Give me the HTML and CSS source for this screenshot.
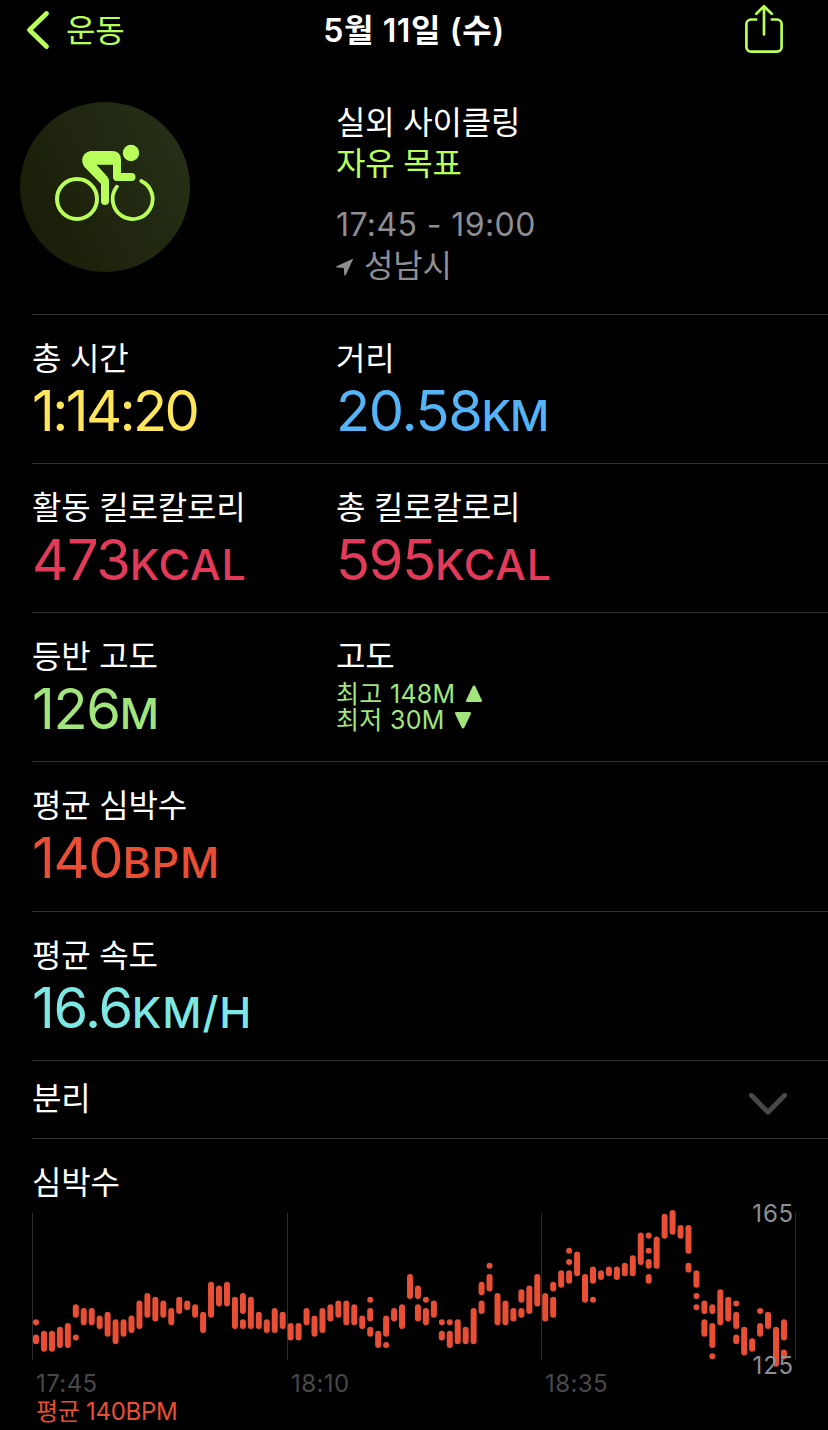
FILE: index.html
```html
<!DOCTYPE html>
<html lang="ko">
<head>
  <meta charset="UTF-8">
  <meta name="viewport" content="width=device-width, initial-scale=1.0">
  <meta name="theme-color" content="#000000">
  <title>5월 11일 (수) - 운동</title>
  <link rel="stylesheet" href="styles.css">
</head>
<body>
  <header class="nav">
    <a href="#" class="nav-back">
      <svg class="nav-chevron" viewBox="0 0 24 40" fill="none" stroke="currentColor" stroke-width="4.8" stroke-linecap="round" stroke-linejoin="round">
        <path d="M20.5 3.5L3.5 20l17 16.5"></path>
      </svg>
      <span>운동</span>
    </a>
    <h1>5월 11일 (수)</h1>
    <a href="#" class="nav-share" aria-label="공유">
      <svg viewBox="0 0 40 50" fill="none" stroke="currentColor" stroke-width="2.7" stroke-linecap="round" stroke-linejoin="round">
        <path d="M13.2 15.5H7a4.6 4.6 0 0 0-4.6 4.6v23A4.6 4.6 0 0 0 7 47.7h26a4.6 4.6 0 0 0 4.6-4.6v-23a4.6 4.6 0 0 0-4.6-4.6h-6.2" stroke-linecap="butt"></path>
        <path d="M20 30.5V2.4M12.3 9.8L20 2.2l7.7 7.6"></path>
      </svg>
    </a>
  </header>

  <main>
    <section class="summary">
      <div class="badge">
        <!-- Cyclist -->
        <svg class="badge-icon" viewBox="0 0 102 78" fill="none" stroke="currentColor" stroke-linecap="round" stroke-linejoin="round">
          <circle cx="23" cy="55" r="20" stroke-width="4"></circle>
          <path d="M62.9 42.7A20 20 0 1 0 87.3 37" stroke-width="3.8"></path>
          <path d="M38 7h20q9 0 9 9v13h10.500a4 4 0 0 1 0 8h-14.500a4 4 0 0 1-4-4V20.800H42.500L53 32.200q2 2.200 2 5.200V57a4 4 0 0 1-8 0V40L31.500 24C25 17 29 7 38 7z" fill="currentColor" stroke="none"></path>
          <circle cx="77" cy="9" r="8.200" fill="currentColor" stroke="none"></circle>
        </svg>
      </div>
      <div class="summary-info">
        <p>실외 사이클링</p>
        <p class="goal">자유 목표</p>
        <p class="time">17:45 - 19:00</p>
        <p class="place">
          <svg class="place-icon" viewBox="0 0 18 18" fill="currentColor"><path d="M17.400.600L.6 8.300q-.8.800.2 1.200l7 .500.500 7q.500 1.200 1.400.200z"></path></svg>
          성남시
        </p>
      </div>
    </section>

    <section class="stats">
      <div class="row">
        <div class="stat">
          <h2>총 시간</h2>
          <p class="value yellow duration">1:14:20</p>
        </div>
        <div class="stat">
          <h2>거리</h2>
          <p class="value blue">20.58<span class="unit unit-km">KM</span></p>
        </div>
      </div>
      <div class="row">
        <div class="stat">
          <h2>활동 킬로칼로리</h2>
          <p class="value pink">473<span class="unit">KCAL</span></p>
        </div>
        <div class="stat">
          <h2>총 킬로칼로리</h2>
          <p class="value pink">595<span class="unit">KCAL</span></p>
        </div>
      </div>
      <div class="row">
        <div class="stat">
          <h2>등반 고도</h2>
          <p class="value green">126<span class="unit">M</span></p>
        </div>
        <div class="stat">
          <h2>고도</h2>
          <ul class="elevation">
            <li>최고 148M <svg viewBox="0 0 18 18" fill="currentColor"><path d="M7.600 1.400q1.400-2 2.800 0l6.400 13.600q.800 2-1.200 2H2.400q-2 0-1.200-2z"></path></svg></li>
            <li>최저 30M <svg viewBox="0 0 18 18" fill="currentColor"><path d="M7.600 16.600q1.400 2 2.800 0L16.800 3q.800-2-1.200-2H2.400q-2 0-1.200 2z"></path></svg></li>
          </ul>
        </div>
      </div>
      <div class="row row-heart">
        <div class="stat">
          <h2>평균 심박수</h2>
          <p class="value red">140<span class="unit">BPM</span></p>
        </div>
      </div>
      <div class="row">
        <div class="stat">
          <h2>평균 속도</h2>
          <p class="value cyan">16.6<span class="unit">KM/H</span></p>
        </div>
      </div>
      <div class="row row-splits">
        <h2>분리</h2>
        <svg class="splits-chevron" viewBox="0 0 40 24" fill="none" stroke="currentColor" stroke-width="4.8" stroke-linecap="round" stroke-linejoin="round">
          <path d="M3.300 3.200L20 20.300 36.700 3.200"></path>
        </svg>
      </div>
    </section>

    <section class="heart">
      <h2>심박수</h2>
      <div class="chart">
        <svg id="heart-chart" viewBox="0 0 796 170">
          <path class="grid-line" d="M32.500 13v147M287.500 13v147M541.500 13v147M795.500 13v147"></path>
          <g id="heart-bars" class="bars"></g>
        </svg>
        <span class="chart-max">165</span>
        <span class="chart-min">125</span>
      </div>
      <div class="chart-times">
        <span>17:45</span>
        <span>18:10</span>
        <span>18:35</span>
      </div>
      <p class="chart-average">평균 140BPM</p>
    </section>
  </main>

  <script src="chart.js"></script>
</body>
</html>
```
FILE: styles.css
```css
*, *::before, *::after {
  margin: 0;
  padding: 0;
  box-sizing: border-box;
}

body {
  font-family: Inter, 'Noto Sans CJK KR', sans-serif;
  background-color: #000;
  color: #fff;
  font-size: 32px;
  line-height: 41px;
  letter-spacing: -0.2px;
  height: 1430px;
  overflow: hidden;
}

a {
  color: inherit;
  text-decoration: none;
}

h2 {
  font-size: 32px;
  font-weight: 400;
  line-height: 41px;
}

svg {
  display: block;
}

/* Navigation bar */
.nav {
  display: grid;
  grid-template-columns: 1fr auto 1fr;
  align-items: center;
  height: 60px;
  padding: 0 44px 0 26px;
}

.nav-back,
.nav-share {
  color: #b9ff59;
}

.nav-back {
  display: flex;
  align-items: center;
  gap: 16px;
}

.nav-chevron {
  width: 24px;
  height: 40px;
}

.nav h1 {
  font-size: 32px;
  font-weight: 600;
  line-height: 41px;
  letter-spacing: 0.6px;
  padding-left: 18px;
}

.nav-share {
  justify-self: end;
}

.nav-share svg {
  width: 40px;
  height: 50px;
  margin-bottom: 2px;
}

/* Workout summary */
.summary {
  display: flex;
  height: 254px;
  padding: 42px 0 0 20px;
}

.badge {
  display: flex;
  align-items: center;
  justify-content: center;
  width: 170px;
  height: 170px;
  margin-right: 146px;
  border-radius: 50%;
  background: linear-gradient(65deg, #191b05, #20260f 50%, #273118);
  color: #b9ff59;
}

.badge-icon {
  width: 102px;
  height: 78px;
  margin-bottom: 8px;
}

.goal {
  color: #b9ff59;
}

.time,
.place {
  color: #8e8e93;
}

.time {
  margin-top: 20px;
  letter-spacing: 0.4px;
}

.place {
  display: flex;
  align-items: center;
  gap: 10px;
}

.place-icon {
  width: 18px;
  height: 18px;
  margin-top: 2px;
}

/* Stats */
.stats {
  padding-left: 32px;
}

.row {
  display: grid;
  grid-template-columns: 304px 1fr;
  height: 149px;
  padding-top: 23px;
  border-top: 1px solid #333335;
}

.row-heart {
  height: 150px;
}

.value {
  font-size: 56px;
  line-height: 64px;
  letter-spacing: -1.3px;
  white-space: nowrap;
}

.duration {
  letter-spacing: -2.6px;
}

.unit {
  font-size: 43px;
  font-weight: 500;
  letter-spacing: 0.9px;
}

.unit-km {
  letter-spacing: -1.2px;
}

.yellow { color: #ffe55c; }
.blue { color: #55b4f6; }
.pink { color: #e43a59; }
.green { color: #a3e57d; }
.red { color: #e94f35; }
.cyan { color: #7de7e3; }

.elevation {
  list-style: none;
  color: #a3e57d;
  font-size: 25px;
  line-height: 26px;
  letter-spacing: 0.3px;
  padding-top: 4px;
}

.elevation li {
  display: flex;
  align-items: center;
  gap: 9px;
}

.elevation svg {
  width: 18px;
  height: 18px;
}

.row-splits {
  display: flex;
  justify-content: space-between;
  height: 79px;
  padding: 17px 40px 0 0;
  border-bottom: 1px solid #333335;
}

.splits-chevron {
  width: 40px;
  height: 24px;
  margin-top: 14px;
  color: #48484a;
}

/* Heart rate chart */
.heart h2 {
  height: 61px;
  padding: 23px 0 0 32px;
}

.chart {
  position: relative;
  height: 170px;
}

.chart svg {
  width: 796px;
  height: 170px;
}

.grid-line {
  stroke: #2c2c2e;
  stroke-width: 1;
}

.bars {
  stroke: #e94f35;
  stroke-width: 6;
  stroke-linecap: round;
}

/* Range labels sit over the bars */
.chart-max,
.chart-min {
  position: absolute;
  right: 34px;
  color: #8e8e93;
  font-size: 24px;
  line-height: 28px;
  letter-spacing: 0.8px;
}

.chart-max {
  top: 0;
}

.chart-min {
  top: 152px;
}

.chart-times {
  display: grid;
  grid-template-columns: 255px 254px 1fr;
  padding-left: 36px;
  color: #48484a;
  font-size: 24px;
  line-height: 28px;
  letter-spacing: 0.4px;
}

.chart-average {
  padding-left: 36px;
  color: #e94f35;
  font-size: 24px;
  line-height: 27px;
  letter-spacing: -0.3px;
}
```
FILE: chart.js
```js
// Heart rate ranges in BPM, one column per sample: [high, low] pairs
const samples = [
  [[136, 136], [132, 131]], [[133, 129]], [[133, 129]], [[134, 130]], [[135, 130]],
  [[140, 138], [132, 132]], [[139, 136]], [[139, 136]], [[137, 135]], [[138, 133]],
  [[136, 131]], [[136, 133]], [[137, 134]], [[141, 135]], [[143, 138]],
  [[142, 137]], [[141, 138]], [[139, 136]], [[142, 139]], [[141, 140]],
  [[140, 138]], [[138, 134]], [[146, 138]], [[145, 141]], [[146, 141]],
  [[142, 135]], [[143, 139], [136, 135]], [[142, 135]], [[138, 135]], [[136, 134]],
  [[139, 134]], [[138, 135]], [[135, 132]], [[135, 132]], [[139, 136]],
  [[137, 133]], [[139, 134]], [[140, 137]], [[141, 138]], [[141, 136]],
  [[140, 136]], [[137, 135]], [[142, 142], [139, 137], [134, 133]], [[133, 130]], [[137, 133], [130, 130]],
  [[139, 137]], [[140, 135]], [[148, 143]], [[145, 143], [140, 137]], [[142, 142], [139, 136]],
  [[141, 138]], [[136, 136], [133, 132]], [[136, 136], [133, 130]], [[136, 131]], [[134, 131]],
  [[139, 131]], [[146, 144], [141, 139]], [[151, 151], [148, 145]], [[143, 136]], [[141, 136]],
  [[139, 137]], [[144, 142], [139, 138]], [[145, 139]], [[148, 141]], [[143, 137]],
  [[146, 145], [142, 138]], [[149, 146]], [[155, 155], [152, 152], [149, 147]], [[154, 149]], [[148, 142]],
  [[150, 147], [142, 142]], [[149, 148]], [[150, 149]], [[150, 148]], [[151, 149]],
  [[153, 149]], [[159, 152]], [[159, 159], [155, 155], [152, 151], [148, 147]], [[158, 151]], [[164, 159]],
  [[165, 160]], [[161, 159]], [[161, 155], [151, 150]], [[149, 146], [143, 143], [140, 140]], [[141, 139], [136, 133]],
  [[140, 139], [135, 130], [127, 127]], [[144, 136]], [[142, 137]], [[141, 141], [138, 135], [132, 131]], [[134, 128]],
  [[131, 129]], [[139, 139], [135, 133]], [[138, 135]], [[134, 125]], [[136, 132], [128, 127]]
];

const x = i => 36 + i * 7.957;
const y = bpm => 13 + (165 - bpm) * 3.77;

const path = document.createElementNS('http://www.w3.org/2000/svg', 'path');
path.setAttribute('d', samples.map((ranges, i) =>
  ranges.map(([high, low]) => `M${x(i)} ${y(high)}V${y(low) + 0.01}`).join('')
).join(''));
document.getElementById('heart-bars').appendChild(path);
```
